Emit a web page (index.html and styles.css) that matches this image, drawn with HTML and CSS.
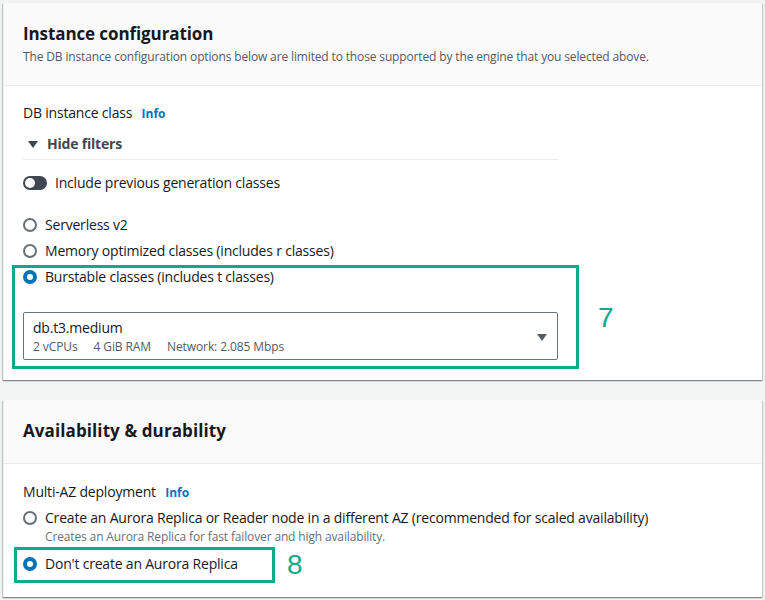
FILE: index.html
```html
<!DOCTYPE html>
<html lang="en">
<head>
<meta charset="utf-8">
<title>Instance configuration</title>
<link rel="stylesheet" href="styles.css">
</head>
<body>
<div class="page">
  <section class="card card-instance">
    <header class="card-header">
      <h2 class="card-title">Instance configuration</h2>
      <p class="card-desc">The DB instance configuration options below are limited to those supported by the engine that you selected above.</p>
    </header>
    <div class="card-body">
      <div class="field-label">DB instance class <span class="info">Info</span></div>
      <div class="filters-toggle"><span class="caret-down"></span>Hide filters</div>
      <div class="toggle-row"><span class="toggle"><span class="knob"></span></span>Include previous generation classes</div>
      <div class="radio-group">
        <div class="radio-row r-serverless"><span class="radio"></span>Serverless v2</div>
        <div class="radio-row r-memory"><span class="radio"></span>Memory optimized classes (includes r classes)</div>
        <div class="radio-row r-burst"><span class="radio checked"></span>Burstable classes (includes t classes)</div>
      </div>
      <div class="select">
        <div class="select-text">
          <div class="select-value">db.t3.medium</div>
          <div class="select-meta"><span>2 vCPUs</span><span>4 GiB RAM</span><span>Network: 2.085 Mbps</span></div>
        </div>
        <span class="select-caret"></span>
      </div>
    </div>
    <div class="annot-box box7"></div>
    <div class="annot-num num7">7</div>
  </section>

  <section class="card card-avail">
    <header class="card-header">
      <h2 class="card-title title-avail">Availability &amp; durability</h2>
    </header>
    <div class="card-body">
      <div class="field-label">Multi-AZ deployment <span class="info">Info</span></div>
      <div class="radio-row r-replica"><span class="radio"></span>Create an Aurora Replica or Reader node in a different AZ (recommended for scaled availability)</div>
      <div class="radio-desc">Creates an Aurora Replica for fast failover and high availability.</div>
      <div class="radio-row r-none"><span class="radio checked"></span>Don't create an Aurora Replica</div>
    </div>
    <div class="annot-box box8"></div>
    <div class="annot-num num8">8</div>
  </section>
</div>
</body>
</html>
```

FILE: styles.css
```css
* { box-sizing: border-box; }
html, body { margin: 0; padding: 0; }
body {
  background: #f2f3f3;
  font-family: "Open Sans", "Noto Sans", sans-serif;
  color: #16191f;
  width: 765px;
  height: 600px;
  overflow: hidden;
}
.page {
  padding: 3px 3px 0 3px;
  display: flex;
  flex-direction: column;
  gap: 20px;
}
.card {
  position: relative;
  background: #fff;
  border-left: 1px solid #eaeded;
  box-shadow: 0 1px 1px 0 rgba(0,28,36,.3), 1px 1px 1px 0 rgba(0,28,36,.15), -1px 1px 1px 0 rgba(0,28,36,.15);
  width: 759px;
}
.card-instance { height: 377px; }
.card-avail { height: 197px; }
.card-header {
  background: #fafafa;
  border-bottom: 1px solid #eaeded;
  padding: 20px 20px 20px 19px;
}
.card-avail .card-header { padding: 20px 20px 21px 19px; }
.card-title {
  margin: 0;
  font-size: 17px;
  line-height: 22px;
  font-weight: 700;
  letter-spacing: -0.1px;
}
.title-avail { letter-spacing: 0.1px; }
.card-desc {
  margin: 4px 0 0 0;
  font-size: 12px;
  line-height: 16px;
  color: #545b64;
  letter-spacing: -0.14px;
}
.card-body {
  padding: 17px 20px 0 19px;
  font-size: 14px;
  line-height: 20px;
  letter-spacing: -0.2px;
}
.card-avail .card-body { padding-top: 18px; }
.field-label { height: 20px; }
.info {
  font-size: 12px;
  font-weight: 700;
  color: #0073bb;
  margin-left: 6px;
  letter-spacing: 0;
}
.filters-toggle {
  margin-top: 11px;
  width: 535px;
  height: 26px;
  border-bottom: 1px solid #eaeded;
  display: flex;
  align-items: flex-start;
  font-weight: 700;
  color: #414750;
}
.caret-down {
  width: 0; height: 0;
  border-left: 5px solid transparent;
  border-right: 5px solid transparent;
  border-top: 7px solid #414750;
  margin: 7px 9px 0 5px;
}
.toggle-row {
  margin-top: 13px;
  display: flex;
  align-items: center;
  height: 20px;
}
.toggle {
  width: 24px; height: 14px;
  border-radius: 7px;
  background: #414750;
  margin-right: 8px;
  position: relative;
  display: inline-block;
}
.knob {
  position: absolute;
  left: 2px; top: 2px;
  width: 10px; height: 10px;
  border-radius: 50%;
  background: #fff;
}
.radio-group { margin-top: 22px; }
.radio-row {
  display: flex;
  align-items: center;
  height: 20px;
}
.r-memory { margin-top: 6px; }
.r-burst { margin-top: 6px; }
.radio {
  width: 14px; height: 14px;
  border-radius: 50%;
  border: 2px solid #687078;
  margin-right: 8px;
  flex: none;
}
.radio.checked {
  border: 4px solid #0073bb;
  background: #fff;
}
.select {
  margin-top: 25px;
  width: 535px;
  height: 48px;
  border: 1px solid #687078;
  border-radius: 2px;
  display: flex;
  align-items: flex-start;
  padding: 6px 10px 0 9px;
}
.select-text { flex: 1; }
.select-value { font-size: 14px; line-height: 18px; }
.select-meta {
  margin-top: 2px;
  font-size: 12px;
  line-height: 16px;
  color: #545b64;
  display: flex;
  gap: 16px;
  letter-spacing: -0.1px;
}
.select-caret {
  width: 0; height: 0;
  border-left: 5px solid transparent;
  border-right: 5px solid transparent;
  border-top: 7px solid #545b64;
  margin-top: 15px;
}
.r-replica { margin-top: 6px; }
.radio-desc {
  padding-left: 22px;
  font-size: 12px;
  line-height: 16px;
  color: #687078;
  margin-top: 1px;
  letter-spacing: -0.14px;
}
.r-none { margin-top: 9px; }
.annot-box {
  position: absolute;
  border: 3px solid #13a88a;
}
.box7 { left: 8px; top: 262px; width: 567px; height: 104px; }
.box8 { left: 10px; top: 147px; width: 261px; height: 36px; }
.annot-num {
  position: absolute;
  font-family: "Liberation Sans", Arial, sans-serif;
  font-size: 28px;
  line-height: 32px;
  color: #13a88a;
}
.num7 { left: 594px; top: 299px; }
.num8 { left: 283px; top: 149px; }
```
